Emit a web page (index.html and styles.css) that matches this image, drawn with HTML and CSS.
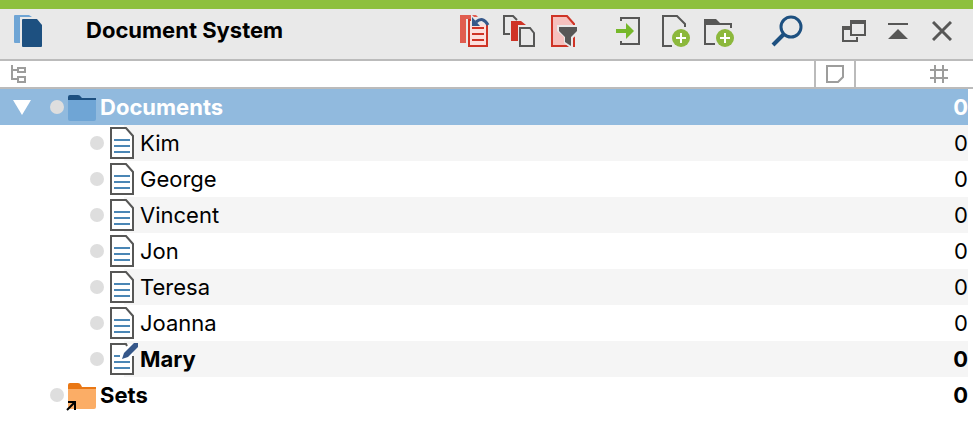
FILE: index.html
```
<!DOCTYPE html>
<html lang="en">
<head>
    <meta charset="UTF-8">
    <title>Document System</title>
    <link rel="stylesheet" href="styles.css">
</head>
<body>
    <svg class="symbols" aria-hidden="true">
        <symbol id="doc" viewBox="0 0 28 32">
            <path d="M1 1h15l7 8v22H1z" fill="#fff" stroke="#575756" stroke-width="2"/>
            <path d="M4 13h16M4 19h16M4 25h16" stroke="#4a86b5" stroke-width="2"/>
        </symbol>
        <symbol id="doc-edit" viewBox="0 0 28 32">
            <path d="M1 1h22v30H1z" fill="#fff"/>
            <path d="M17 3l-1-2H1v30h22V13" fill="none" stroke="#575756" stroke-width="2"/>
            <path d="M4 13h6M4 19h16M4 25h16" stroke="#4a86b5" stroke-width="2"/>
            <path d="M12 16l2-6 10-10h4v4L18 14z" fill="#36588a"/>
        </symbol>
    </svg>

    <header class="toolbar">
        <svg class="logo" width="28" height="32" viewBox="0 0 28 32">
            <path d="M0 1q0-1 1-1h14l3 2H6v26H1q-1 0-1-1z" fill="#6fa5d5"/>
            <path d="M8 5q0-1 1-1h14l5 6v21q0 1-1 1H9q-1 0-1-1z" fill="#1d5080"/>
        </svg>
        <h1>Document System</h1>
        <div class="tools">
            <button title="Reset activations">
                <svg width="34" height="32" viewBox="0 0 34 32">
                    <path d="M0 0h11v4H6v24H0z" fill="#e05d50"/>
                    <path d="M9 5h18v26H9z" fill="#fce0de" stroke="#cf3426" stroke-width="2"/>
                    <path d="M12 13h12M12 19h12M12 25h12" stroke="#cf3426" stroke-width="2"/>
                    <path d="M11 2h19v8h-2L22 8l-3 1 2 2H11z" fill="#e9e9e9"/>
                    <path d="M12 0h4l2 2h-4z" fill="#e05d50"/>
                    <path d="M16 7q7-6 12 3" fill="none" stroke="#36588a" stroke-width="3"/>
                    <path d="M12 2v9h8z" fill="#36588a"/>
                </svg>
            </button>
            <button title="Activated documents">
                <svg width="36" height="32" viewBox="0 0 36 32">
                    <path d="M7 19H1V1h9l4 4" fill="none" stroke="#575756" stroke-width="2"/>
                    <path d="M8 6h10l5 4h-8v16H8z" fill="#cf3426"/>
                    <path d="M17 13h10l4 5v13H17z" fill="#e9e9e9" stroke="#575756" stroke-width="2"/>
                </svg>
            </button>
            <button title="Filter documents">
                <svg width="28" height="32" viewBox="0 0 28 32">
                    <path d="M1 1h15l7 8v22H1z" fill="#f5c1be" stroke="#cf3426" stroke-width="2"/>
                    <path d="M6 10h22v8l-6 5v9h-4l-5-4v-6l-7-6z" fill="#e9e9e9"/>
                    <path d="M8 12h18v4l-6 6v9l-6-4v-5l-6-6z" fill="#575756"/>
                    <path d="M22 24h2v8h-2z" fill="#cf3426"/>
                </svg>
            </button>
            <button class="gap-before" title="Import documents">
                <svg width="32" height="28" viewBox="0 0 32 28">
                    <path d="M5 4V1h18v26H5v-3" fill="none" stroke="#575756" stroke-width="2"/>
                    <path d="M0 12h10V6l8 8-8 8v-6H0z" fill="#76b82a"/>
                </svg>
            </button>
            <button title="New document">
                <svg width="28" height="32" viewBox="0 0 28 32">
                    <path d="M10 31H1V1h14l8 8v3" fill="none" stroke="#575756" stroke-width="2"/>
                    <circle cx="19" cy="23" r="9" fill="#8cb83c"/>
                    <path d="M14 23h10M19 18v10" stroke="#fff" stroke-width="2"/>
                </svg>
            </button>
            <button title="New group">
                <svg width="32" height="32" viewBox="0 0 32 32">
                    <path d="M0 4h12l4 4h12v5h-2v-3H2v18h9v2H0z" fill="#575756"/>
                    <circle cx="21" cy="23" r="9" fill="#8cb83c"/>
                    <path d="M16 23h10M21 18v10" stroke="#fff" stroke-width="2"/>
                </svg>
            </button>
            <button class="gap-before" title="Search">
                <svg width="32" height="32" viewBox="0 0 32 32" fill="none" stroke="#1d5080">
                    <circle cx="20" cy="12" r="10" stroke-width="3"/>
                    <path d="M13 19L2 30" stroke-width="4"/>
                </svg>
            </button>
            <button class="gap-before" title="Undock window">
                <svg width="24" height="22" viewBox="0 0 24 22" fill="none" stroke="#575756" stroke-width="2">
                    <path d="M7 8H1v13h14v-4M9 1h14v14H9z"/>
                    <path d="M8 2h16M0 8h8" stroke-width="4"/>
                </svg>
            </button>
            <button title="Minimize">
                <svg width="20" height="16" viewBox="0 0 20 16" fill="#575756">
                    <path d="M0 0h20v2H0zM10 6l10 10H0z"/>
                </svg>
            </button>
            <button title="Close">
                <svg width="20" height="20" viewBox="0 0 20 20" stroke="#575756" stroke-width="3">
                    <path d="M1 1l18 18M19 1L1 19"/>
                </svg>
            </button>
        </div>
    </header>

    <table class="tree">
        <thead>
            <tr>
                <th class="col-name" aria-label="Name">
                    <svg width="16" height="18" viewBox="0 0 16 18" fill="none" stroke="#9d9d9c" stroke-width="2">
                        <path d="M1 0v15M0 5h6M0 14h6M7 3h7v4H7zM7 12h7v5H7z"/>
                    </svg>
                </th>
                <th class="col-memo" aria-label="Memo">
                    <svg width="18" height="18" viewBox="0 0 18 18" fill="none" stroke="#9d9d9c" stroke-width="2">
                        <path d="M1 1h16v11l-5 5H1z"/>
                    </svg>
                </th>
                <th class="col-count" aria-label="Count">
                    <svg width="18" height="18" viewBox="0 0 18 18" stroke="#9d9d9c" stroke-width="2">
                        <path d="M0 5h18M0 13h18M5 0v18M13 0v18"/>
                    </svg>
                </th>
            </tr>
        </thead>
        <tbody>
            <tr class="selected bold">
                <td colspan="2">
                    <div class="item">
                        <button class="arrow" title="Collapse">
                            <svg width="18" height="15" viewBox="0 0 18 15"><path d="M0 0h18L9 15z" fill="#fff"/></svg>
                        </button>
                        <span class="dot"></span>
                        <svg class="folder" width="28" height="28" viewBox="0 0 28 28">
                            <path d="M0 4q0-2 2-2h8q2 0 3 2l1 1h14v3H0z" fill="#1d5080"/>
                            <path d="M0 7h28v19q0 2-2 2H2q-2 0-2-2z" fill="#6fa5d5"/>
                        </svg>
                        <span>Documents</span>
                    </div>
                </td>
                <td class="count">0</td>
            </tr>
            <tr class="child">
                <td colspan="2"><div class="item"><span class="dot"></span><svg class="doc"><use href="#doc"/></svg><span>Kim</span></div></td>
                <td class="count">0</td>
            </tr>
            <tr class="child">
                <td colspan="2"><div class="item"><span class="dot"></span><svg class="doc"><use href="#doc"/></svg><span>George</span></div></td>
                <td class="count">0</td>
            </tr>
            <tr class="child">
                <td colspan="2"><div class="item"><span class="dot"></span><svg class="doc"><use href="#doc"/></svg><span>Vincent</span></div></td>
                <td class="count">0</td>
            </tr>
            <tr class="child">
                <td colspan="2"><div class="item"><span class="dot"></span><svg class="doc"><use href="#doc"/></svg><span>Jon</span></div></td>
                <td class="count">0</td>
            </tr>
            <tr class="child">
                <td colspan="2"><div class="item"><span class="dot"></span><svg class="doc"><use href="#doc"/></svg><span>Teresa</span></div></td>
                <td class="count">0</td>
            </tr>
            <tr class="child">
                <td colspan="2"><div class="item"><span class="dot"></span><svg class="doc"><use href="#doc"/></svg><span>Joanna</span></div></td>
                <td class="count">0</td>
            </tr>
            <tr class="child bold">
                <td colspan="2"><div class="item"><span class="dot"></span><svg class="doc"><use href="#doc-edit"/></svg><span>Mary</span></div></td>
                <td class="count">0</td>
            </tr>
            <tr class="bold">
                <td colspan="2">
                    <div class="item">
                        <span class="arrow"></span>
                        <span class="dot"></span>
                        <svg class="folder" width="28" height="28" viewBox="0 0 28 28">
                            <path d="M0 4q0-2 2-2h8q2 0 3 2l1 2h14v3H0z" fill="#e97714"/>
                            <path d="M0 8h28v18q0 2-2 2H2q-2 0-2-2z" fill="#fbad66"/>
                            <path d="M-1 29L7 21M0 21h7v8" fill="none" stroke="#000" stroke-width="2"/>
                        </svg>
                        <span>Sets</span>
                    </div>
                </td>
                <td class="count">0</td>
            </tr>
        </tbody>
    </table>
</body>
</html>
```
FILE: styles.css
```
body {
    margin: 0;
    background: #fff;
    color: #000;
    font-family: Inter, 'Liberation Sans', sans-serif;
    font-size: 22px;
}
button {
    padding: 0;
    border: none;
    background: none;
    cursor: pointer;
}
svg {
    display: block;
    flex: none;
}
.symbols {
    position: absolute;
    width: 0;
    height: 0;
}
.toolbar {
    display: flex;
    align-items: center;
    height: 44px;
    padding: 0 9px 6px 14px;
    border-top: 9px solid #8dc03d;
    border-bottom: 2px solid #bbb;
    background: #e9e9e9;
}
h1 {
    flex: 1;
    margin: 0 0 0 44px;
    font-size: 22px;
    line-height: 28px;
    padding-bottom: 2px;
    font-weight: 700;
}
.tools {
    display: flex;
    align-items: center;
}
.tools button {
    width: 44px;
    display: flex;
    justify-content: center;
}
.tools .gap-before {
    margin-left: 23px;
}
.tree {
    width: 100%;
    border-collapse: collapse;
    table-layout: fixed;
}
th {
    height: 26px;
    padding: 0;
    border-bottom: 2px solid #bbb;
}
.col-name {
    padding-left: 11px;
}
.col-memo {
    width: 38px;
    border-left: 2px solid #bbb;
    border-right: 2px solid #bbb;
}
.col-memo svg {
    margin: 0 auto;
}
.col-count {
    width: 117px;
}
.col-count svg {
    margin: 0 25px 0 auto;
}
td {
    height: 36px;
    padding: 0;
}
.item {
    display: flex;
    align-items: center;
    height: 36px;
    padding-left: 13px;
}
.child .item {
    padding-left: 90px;
}
.arrow {
    width: 18px;
    margin-right: 19px;
}
.dot {
    width: 14px;
    height: 14px;
    border-radius: 50%;
    background: #dedede;
}
.folder {
    margin: 0 4px;
    overflow: visible;
}
.doc {
    width: 28px;
    height: 32px;
    margin: 0 2px 0 6px;
}
.count {
    text-align: right;
    padding-right: 5px;
    background-clip: content-box;
}
.bold {
    font-weight: 700;
}
.selected {
    color: #fff;
}
.selected .item,
.selected .count {
    background-color: #91bade;
}
/* stripes start behind the document icon */
.child:nth-child(even) .item {
    background: linear-gradient(to right, transparent 124px, #f5f5f5 124px);
}
.child:nth-child(even) .count {
    background-color: #f5f5f5;
}
```
